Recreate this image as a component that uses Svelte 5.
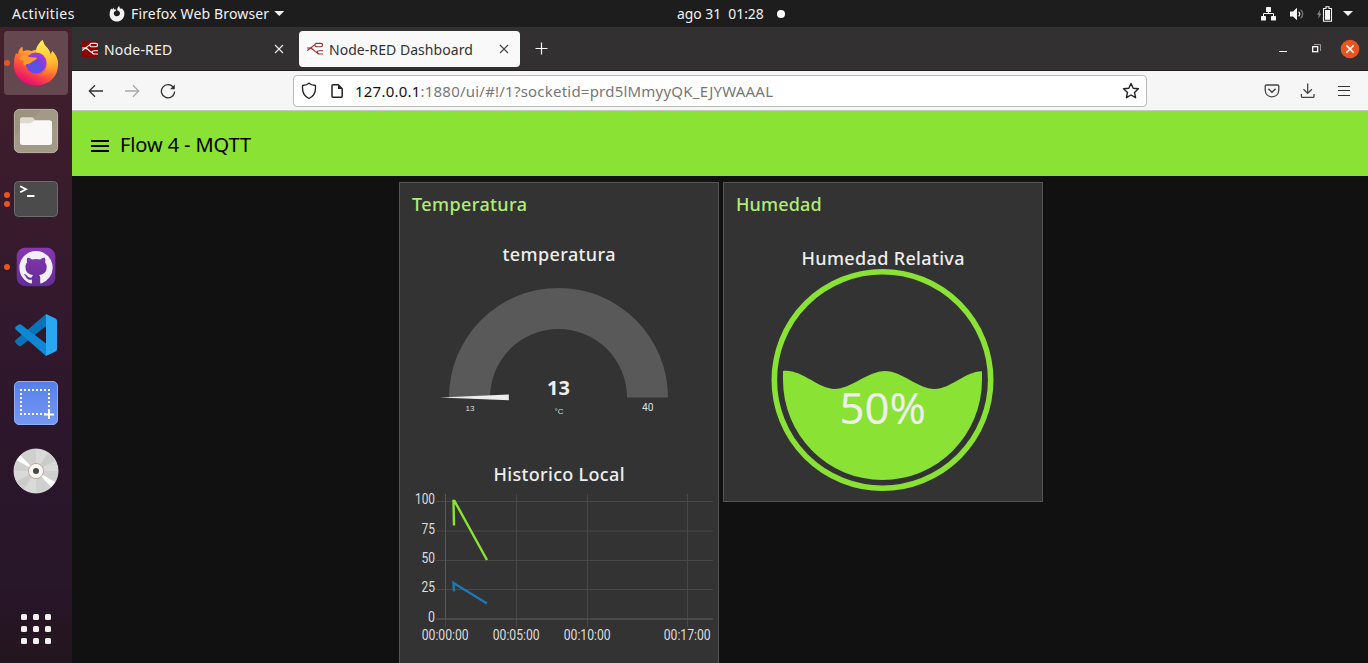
<script>
  const apps = ['firefox', 'files', 'terminal', 'github', 'code', 'capture', 'disc'];
  const running = { firefox: 1, terminal: 2, github: 1 };
  const yTicks = [
    { label: '100', y: 501.5, w: 20 },
    { label: '75', y: 531, w: 13.5 },
    { label: '50', y: 560.5, w: 13.5 },
    { label: '25', y: 589.5, w: 13.5 },
    { label: '0', y: 619, w: 7 }
  ];
  const xTicks = [
    { label: '00:00:00', x: 445.5 },
    { label: '00:05:00', x: 516.5 },
    { label: '00:10:00', x: 587.5 },
    { label: '00:17:00', x: 687.5 }
  ];
</script>

{#snippet flowIcon(bg, fg)}
  <svg class="fav" width="16" height="16" viewBox="0 0 16 16">
    <rect width="16" height="16" rx="1" fill={bg} />
    <g fill="none" stroke={fg} stroke-width="1.15">
      <path d="M0 7H2.5C6 7 5.3 4 8 4M3.5 7.4C7 7.4 6.8 11.3 10 11.3M0 9.4C2 9.4 2.2 7 4 7" />
      <rect x="8" y="2.3" width="7.4" height="3.4" rx="1.2" />
      <path d="M16 9.7H12.5C10.5 9.7 10.2 10.4 10.2 11.3S10.8 13 12.5 13H16" />
    </g>
  </svg>
{/snippet}

<div class="desktop">
  <header class="topbar">
    <span class="activities">Activities</span>
    <svg class="ffmono" width="16" height="16" viewBox="0 0 16 16">
      <path fill="#f2f2f2" fill-rule="evenodd" d="M1.2 4.6 2.2 2.4 3.3 3.5 4.5 1.4 5 3.4C6 3.2 7 3.6 7.4 4.2L5.7 5.5C4.4 6.2 4.5 8.7 6 9.7 8 11 11 9.6 11 7.2 11 5.6 9.5 4.8 8.2 4.2 8 2.2 9 .8 10.2 0L10.8 2.2 12 2.8 13 2.4C15 4.1 15.8 6.5 15.3 9 14.6 13 11.7 15.5 8 15.5 3.9 15.5.6 12.4.6 8.4.6 7 1 5.8 1.2 4.6Z" />
    </svg>
    <span class="appname">Firefox Web Browser</span>
    <i class="caret"></i>
    <div class="clock"><span>ago 31</span><span>01:28</span><b></b></div>
    <div class="tray">
      <svg width="16" height="14" viewBox="0 0 16 14"><g fill="#f5f5f5"><rect x="5" y="0" width="5" height="5" rx=".6" /><rect x="0" y="9" width="5" height="4.5" rx=".6" /><rect x="10" y="9" width="5" height="4.5" rx=".6" /></g><path d="M7.5 4V7M2.5 9V6.5H12.5V9" fill="none" stroke="#f5f5f5" /></svg>
      <svg width="16" height="14" viewBox="0 0 16 14"><path fill="#f5f5f5" d="M0 4.4H3L7 .8V13.2L3 9.6H0Z" /><path d="M8.7 4.6Q10.8 7 8.7 9.4" fill="none" stroke="#eee" stroke-width="1.2" /><path d="M10.6 2.6Q14.8 7 10.6 11.4" fill="none" stroke="#777" stroke-width="1.3" /></svg>
      <svg width="16" height="16" viewBox="0 0 16 16"><path fill="#888" d="M3.2 3.5 0 8.8H1.8L1.2 13 4.4 7.5H2.6Z" /><path d="M6.5 2.5H9V.8H12V2.5H14.5V15.2H6.5Z" fill="none" stroke="#f5f5f5" stroke-width="1.1" /><rect x="8" y="4" width="5" height="9.8" fill="#f5f5f5" /></svg>
      <i class="caret"></i>
    </div>
  </header>

  <div class="below">
    <nav class="dock">
      {#each apps as app}
        <div class="slot" class:active={app === 'firefox'}>
          {#if running[app]}
            <div class="dots">{#each Array(running[app]) as _}<i></i>{/each}</div>
          {/if}
          {#if app === 'firefox'}
            <svg width="46" height="48" viewBox="0 0 46 48">
              <defs>
                <linearGradient id="fx" x1=".8" y1="0" x2=".3" y2="1"><stop offset="0" stop-color="#fff44f" /><stop offset=".35" stop-color="#ffb02e" /><stop offset=".65" stop-color="#ff5a36" /><stop offset="1" stop-color="#e6007a" /></linearGradient>
                <linearGradient id="tail" x1=".3" y1="0" x2=".5" y2="1"><stop offset="0" stop-color="#fff15a" /><stop offset=".65" stop-color="#ffbd32" /><stop offset="1" stop-color="#ff8a2b" stop-opacity=".2" /></linearGradient>
                <radialGradient id="globe" cx=".45" cy=".7" r=".75"><stop offset="0" stop-color="#4a5be0" /><stop offset=".5" stop-color="#7542e5" /><stop offset="1" stop-color="#b735d8" /></radialGradient>
              </defs>
              <path fill="url(#fx)" d="M1.2 20 3 14 5 15.5C5 12 7 9.5 9.3 7.6L10 12.3C13 10.8 16 11 18.5 12L25 10C25 6 27 2.8 29.5 1L32 6.8C35 9 37 12 37.8 16L39.2 12C43.5 17 46 22 44.8 29 43 40 34 46.5 23.5 46.5 11 46.5 1 38 .8 26Z" />
              <circle cx="23" cy="24" r="10.5" fill="url(#globe)" />
              <path fill="#ff9a28" d="M6 20C9 14.5 14 15.5 16 18L24 18.8C24 21 20 22 18.5 23.2 16 26 12.5 23.8 12.3 27L10 25 11 22Z" />
              <path fill="url(#tail)" d="M29.5 1C24 6 22.5 10 23.5 13.5 28 13 32 16.5 33.5 20 34.5 24 34.5 27 33.5 30 32 34 29 36 25 36 35 39 44 32 44.8 24 44.8 19 42.5 15 39.2 12L37.8 16C36 8 31 8 29.5 1Z" />
            </svg>
          {:else if app === 'files'}
            <svg width="46" height="46" viewBox="0 0 46 46"><rect x="1.4" y="1.4" width="43.2" height="43.2" rx="5" fill="#9c937f" stroke="#bcb5a5" /><path d="M2 27 28 2H40Q44 2 44 7V40Q44 44 39 44H7Q2 44 2 39Z" fill="#a69d8b" opacity=".65" /><path d="M7 14V11Q7 9.2 9 9.2H18.5Q20 9.2 20.8 10.5L22 12.5V20H7Z" fill="#e0dacc" /><path d="M7 18V15.2H16.5Q18.5 15.2 20 13.5 21.3 12.2 23 12.2H36.5Q39 12.2 39 14.7V34.6Q39 37.1 36.5 37.1H9.5Q7 37.1 7 34.6Z" fill="#f9f8f6" /></svg>
          {:else if app === 'terminal'}
            <svg width="46" height="38" viewBox="0 0 46 38"><rect x="1.5" y="1.5" width="43" height="35" rx="4" fill="#4b4b4b" stroke="#6c6c6c" /><path d="M7.2 6.2 13 9.3 7.2 12.3M14 16H21.5" fill="none" stroke="#fff" stroke-width="1.8" /></svg>
          {:else if app === 'github'}
            <svg width="40" height="40" viewBox="0 0 40 40"><defs><linearGradient id="gh" x2="0" y2="1"><stop stop-color="#8a36b3" /><stop offset="1" stop-color="#602d95" /></linearGradient></defs><rect x=".7" y=".7" width="38.6" height="38.6" rx="8.5" fill="url(#gh)" /><g transform="translate(3.4 4) scale(2.08)"><path fill="#f3eff6" d="M8 0C3.58 0 0 3.58 0 8c0 3.54 2.29 6.53 5.47 7.59.4.07.55-.17.55-.38 0-.19-.01-.82-.01-1.49-2.01.37-2.53-.49-2.69-.94-.09-.23-.48-.94-.82-1.13-.28-.15-.68-.52-.01-.53.63-.01 1.08.58 1.23.82.72 1.21 1.87.87 2.33.66.07-.52.28-.87.51-1.07-1.78-.2-3.64-.89-3.64-3.95 0-.87.31-1.59.82-2.15-.08-.2-.36-1.02.08-2.12 0 0 .67-.21 2.2.82.64-.18 1.32-.27 2-.27s1.36.09 2 .27c1.53-1.04 2.2-.82 2.2-.82.44 1.1.16 1.92.08 2.12.51.56.82 1.27.82 2.15 0 3.07-1.87 3.75-3.65 3.95.29.25.54.73.54 1.48 0 1.07-.01 1.93-.01 2.2 0 .21.15.46.55.38A8.01 8.01 0 0 0 16 8c0-4.42-3.58-8-8-8z" /></g></svg>
          {:else if app === 'code'}
            <svg width="42" height="42" viewBox="0 0 42 42"><path fill="#0873b8" d="M.7 26 31 0V12L6 32Q4.8 32.8 3.5 31.7L.7 29Q-.5 27.5.7 26Z" /><path fill="#1087d3" d="M.7 16 3.5 11Q4.8 9.6 6 10.6L31 29.5V42L.7 15.5Q-.3 14 .7 12.8L4 10.3Z" /><path fill="#29a7f1" d="M31 0 40.5 4.4Q42 5.1 42 7V35Q42 36.8 40.5 37.5L31 42Z" /></svg>
          {:else if app === 'capture'}
            <svg width="46" height="46" viewBox="0 0 46 46"><defs><linearGradient id="cap" x2="0" y2="1"><stop stop-color="#557fe8" /><stop offset="1" stop-color="#7698f3" /></linearGradient></defs><rect x="1.5" y="1.5" width="43" height="43" rx="4.5" fill="url(#cap)" stroke="#91adf5" /><path d="M7 10H37M7 34H34M8 13V33M36 13V30" stroke="#fff" stroke-width="2" stroke-dasharray="2 2" /><path d="M36 30V39M31 34.5H41" stroke="#fff" stroke-width="2" /></svg>
          {:else}
            <svg width="46" height="46" viewBox="0 0 46 46"><circle cx="23" cy="23" r="22" fill="#d0d0cf" stroke="#eee" stroke-width=".8" /><path d="M23 23 23 1A22 22 0 0 1 45 23ZM23 23V45A22 22 0 0 1 1 23Z" fill="#dadad9" /><path d="M23 23 35 5A22 22 0 0 1 42 13ZM23 23 11 41A22 22 0 0 1 4 33Z" fill="#cbcbca" /><path d="M23 23 3.7 12.3 7.5 7.5ZM23 23 42 34 38 39Z" fill="#fff" /><circle cx="23" cy="23" r="7.6" fill="#f7f6f3" stroke="#b8ae9d" /><circle cx="23" cy="23" r="3" fill="#474747" /></svg>
          {/if}
        </div>
      {/each}
      <div class="grid-button">{#each Array(9) as _}<i></i>{/each}</div>
    </nav>

    <main class="browser">
      <div class="tabs">
        <div class="tab first">
          {@render flowIcon('#8f0000', '#fff')}
          <span class="t1">Node-RED</span>
          <svg class="x" width="10" height="10" viewBox="0 0 10 10"><path d="M1 1 9 9M9 1 1 9" stroke="#eee" stroke-width="1.1" /></svg>
        </div>
        <div class="tab current">
          {@render flowIcon('#fff', '#a62a2a')}
          <span class="t2">Node-RED Dashboard</span>
          <svg class="x" width="10" height="10" viewBox="0 0 10 10"><path d="M1 1 9 9M9 1 1 9" stroke="#444" stroke-width="1.1" /></svg>
        </div>
        <svg class="plus" width="13" height="13" viewBox="0 0 13 13"><path d="M6.5 .5V12.5M.5 6.5H12.5" stroke="#fff" stroke-width="1.2" /></svg>
        <div class="window-buttons">
          <svg width="8" height="10" viewBox="0 0 8 10"><path d="M0 7.5H8" stroke="#fff" /></svg>
          <svg width="9" height="9" viewBox="0 0 9 9"><path d="M2 .5H8.5V7" fill="none" stroke="#999" /><rect x=".7" y="2.7" width="5" height="5" fill="none" stroke="#fff" stroke-width="1.3" /></svg>
          <svg width="20" height="20" viewBox="0 0 20 20"><circle cx="10" cy="10" r="9.3" fill="#e95420" /><path d="M6.4 6.4 13.6 13.6M13.6 6.4 6.4 13.6" stroke="#fff" stroke-width="1.5" /></svg>
        </div>
      </div>

      <div class="toolbar">
        <svg width="16" height="14" viewBox="0 0 16 14"><path d="M15 7H1.8M7 1.3 1.3 7 7 12.7" fill="none" stroke="#333" stroke-width="1.3" /></svg>
        <svg width="16" height="14" viewBox="0 0 16 14"><path d="M1 7H14.2M9 1.3 14.7 7 9 12.7" fill="none" stroke="#aaa" stroke-width="1.3" /></svg>
        <svg width="16" height="16" viewBox="0 0 16 16"><path d="M13.6 4.8A6.6 6.6 0 1 0 14.6 8.5" fill="none" stroke="#333" stroke-width="1.3" /><path d="M14.8 1.5V6.2H10Z" fill="#333" /></svg>
        <div class="url">
          <svg width="16" height="18" viewBox="0 0 16 18"><path d="M8 1.2C6 3 3.5 3.3 1.6 3.5 1 9 2.8 14.2 8 16.5 13.2 14.2 15 9 14.4 3.5 12.5 3.3 10 3 8 1.2Z" fill="none" stroke="#222" stroke-width="1.35" /></svg>
          <svg width="12" height="14" viewBox="0 0 12 14"><path d="M1 1.7Q1 .8 2 .8H7.2L11.2 4.8V12.3Q11.2 13.2 10.3 13.2H2Q1 13.2 1 12.3Z" fill="none" stroke="#222" stroke-width="1.5" /><path d="M7 .8V5H11.2Z" fill="#222" /></svg>
          <span class="address"><b>127.0.0.1</b>:1880/ui/#!/1?socketid=prd5lMmyyQK_EJYWAAAL</span>
          <svg class="star" width="18" height="18" viewBox="0 0 18 18"><path d="M9 1.5 11.2 6.3 16.4 6.8 12.5 10.4 13.6 15.7 9 13 4.4 15.7 5.5 10.4 1.6 6.8 6.8 6.3Z" fill="none" stroke="#222" stroke-width="1.4" stroke-linejoin="round" /></svg>
        </div>
        <div class="tools">
          <svg width="16" height="14" viewBox="0 0 16 14"><path d="M2.3 1H13.7Q14.8 1 14.8 2.3V5.8C14.8 10 12 12.8 8 12.8S1.2 10 1.2 5.8V2.3Q1.2 1 2.3 1Z" fill="none" stroke="#444" stroke-width="1.3" /><path d="M4.4 4.8 8 8.3 11.6 4.8" fill="none" stroke="#444" stroke-width="1.5" /></svg>
          <svg width="16" height="16" viewBox="0 0 16 16"><path d="M7.7 .5V10M3.5 6.2 7.7 10.4 11.9 6.2M1.4 11V13.2Q1.4 14.4 2.6 14.4H12.8Q14 14.4 14 13.2V11" fill="none" stroke="#444" stroke-width="1.3" /></svg>
          <svg width="12" height="12" viewBox="0 0 12 12"><path d="M0 1.5H12M0 5.5H12M0 10.5H12" stroke="#333" stroke-width="1.1" /></svg>
        </div>
      </div>

      <div class="appbar">
        <svg width="18" height="12" viewBox="0 0 18 12"><path d="M0 1H18M0 6H18M0 11H18" stroke="#000" stroke-width="2" /></svg>
        <h1>Flow 4 - MQTT</h1>
      </div>

      <div class="board">
        <section class="card tall">
          <h2 class="ct">Temperatura</h2>
          <svg width="318" height="230" viewBox="400 225 318 230">
            <text class="heading" x="502.5" y="261" textLength="113">temperatura</text>
            <path d="M449 397.5A109.5 109.5 0 0 1 668 397.5H627A68.5 68.5 0 0 0 490 397.5Z" fill="#595959" />
            <path d="M440 397.6 508.8 394.4V400.2Z" fill="#eee" />
            <text class="value" x="547" y="395" textLength="23">13</text>
            <text class="tiny" x="470" y="411" text-anchor="middle">13</text>
            <text class="tiny" x="559" y="414" text-anchor="middle">°C</text>
            <text class="max" x="642" y="411" textLength="11.5" lengthAdjust="spacingAndGlyphs">40</text>
          </svg>
          <svg width="318" height="208" viewBox="400 455 318 208">
            <text class="heading" x="493.5" y="481" textLength="131">Historico Local</text>
            <g stroke="#484848">
              {#each yTicks as t}<path d="M436 {t.y}H713" />{/each}
              {#each xTicks as t}<path d="M{t.x} 494V627" />{/each}
            </g>
            <path d="M445.5 494V619M436 619H713" stroke="#575757" />
            {#each yTicks as t}<text class="tick" x={435 - t.w} y={t.y + 2.7} textLength={t.w} lengthAdjust="spacingAndGlyphs">{t.label}</text>{/each}
            {#each xTicks as t}<text class="tick" x={t.x - 23.8} y="640.3" textLength="47" lengthAdjust="spacingAndGlyphs">{t.label}</text>{/each}
            <path d="M454 525.5 453.5 501 454.5 501 487 560" fill="none" stroke="#8ae234" stroke-width="2.4" />
            <path d="M454 591.5 453.5 583 487 603.5" fill="none" stroke="#1f77b4" stroke-width="2.4" />
          </svg>
        </section>

        <section class="card">
          <h2 class="ch">Humedad</h2>
          <svg width="318" height="276" viewBox="724 225 318 276">
            <text class="heading" x="801.5" y="265" textLength="163">Humedad Relativa</text>
            <circle cx="882.5" cy="380" r="108.2" fill="none" stroke="#8ae234" stroke-width="5.6" />
            <path d="M783 371C802 369 818 389 834.5 389S868 371 885 371 918 389 934.5 389 966 371 982 371.3V380A99.5 100 0 0 1 783 380Z" fill="#8ae234" />
            <text class="percent" x="839.5" y="424.3" textLength="86.5" lengthAdjust="spacingAndGlyphs">50%</text>
          </svg>
        </section>
      </div>
    </main>
  </div>
</div>

<style>
  :global(body) { margin: 0; overflow: hidden; }
  .desktop { width: 1368px; height: 663px; overflow: hidden; background: #111; font-family: "Noto Sans", sans-serif; display: flex; flex-direction: column; }
  .desktop * { box-sizing: border-box; }
  svg { display: block; flex: none; }
  .topbar { height: 27px; flex: none; background: #1d1d1d; color: #f2f2f2; display: grid; grid-template-columns: 97px auto auto auto 1fr auto; align-items: center; padding-left: 12px; font-size: 14px; line-height: 27px; white-space: nowrap; position: relative; }
  .activities { letter-spacing: .45px; }
  .ffmono { margin-right: 6px; }
  .appname { letter-spacing: .15px; }
  .caret { width: 10px; height: 5px; background: #f2f2f2; clip-path: polygon(0 0, 100% 0, 50% 100%); margin-left: 5px; }
  .clock { position: absolute; left: 677px; top: 0; display: flex; align-items: center; gap: 7px; font-size: 13.9px; }
  .clock b { width: 8px; height: 8px; border-radius: 50%; background: #fff; margin-left: 6px; }
  .tray { grid-column: 6; display: flex; align-items: center; gap: 13px; padding-right: 15px; }
  .tray svg { position: relative; left: 2px; }
  .tray svg:nth-child(3) { left: 0; }
  .tray .caret { margin-left: -3px; }
  .below { flex: 1; display: flex; min-height: 0; }
  .dock { width: 72px; flex: none; padding: 4px; display: flex; flex-direction: column; gap: 4px; background: linear-gradient(#44202b, #391b2d 25%, #2c162b 65%, #281629 88%, #23151e); }
  .slot { height: 64px; flex: none; border-radius: 4px; display: grid; place-items: center; position: relative; }
  .slot.active { background: #65484f; }
  .dots { position: absolute; left: 0; top: 0; height: 64px; display: flex; flex-direction: column; justify-content: center; gap: 3px; }
  .dots i { width: 6px; height: 6px; border-radius: 50%; background: #e95420; }
  .grid-button { display: grid; grid-template-columns: repeat(3, 6px); gap: 6px; margin: auto 17px 15px; }
  .grid-button i { height: 6px; border-radius: 1.5px; background: #f2f1f0; }
  .browser { flex: 1; min-width: 0; display: flex; flex-direction: column; }
  .tabs { height: 44px; flex: none; background: #323031; border-bottom: 1px solid #1f1d1e; display: flex; align-items: center; }
  .tab { height: 36px; display: flex; align-items: center; padding: 0 11px 0 8px; border-radius: 4px; font-size: 14px; white-space: nowrap; }
  .tab span { padding-top: 1px; }
  .t1 { letter-spacing: .2px; }
  .t2 { letter-spacing: .05px; }
  .tab.first { width: 223px; color: #f2f2f2; padding-left: 10px; }
  .tab.current { width: 221px; margin-left: 4px; background: #f9f9f9; color: #333; }
  .fav { margin-right: 6px; }
  .x { margin-left: auto; }
  .plus { margin-left: 15px; }
  .window-buttons { margin-left: auto; display: flex; align-items: center; gap: 24px; padding-right: 8px; }
  .window-buttons svg:first-child { margin-right: 1px; }
  .window-buttons svg:last-child { margin-left: -5px; }
  .toolbar { height: 40px; flex: none; background: #f6f6f6; border-bottom: 1px solid #c8c8c8; display: flex; align-items: center; gap: 20px; padding: 1px 0 0 16px; }
  .url { width: 854px; height: 32px; margin-left: 97px; border: 1px solid #bbb; border-radius: 4px; background: #fff; display: flex; align-items: center; padding: 0 6px 0 7px; }
  .url svg + svg { margin-left: 14px; }
  .address { margin-left: 12px; font-size: 15px; letter-spacing: .22px; color: #777; white-space: nowrap; }
  .address b { font-weight: 400; color: #111; }
  .url .star { margin-left: auto; }
  .tools { margin-left: auto; display: flex; align-items: center; gap: 20px; padding-right: 18px; }
  .tools svg:last-child { margin-left: 2px; }
  .appbar { height: 65px; flex: none; background: #8ae234; display: flex; align-items: center; padding: 4px 0 0 19px; gap: 11px; color: #000; }
  h1 { margin: -1px 0 0; font-size: 20px; font-weight: 400; line-height: 28px; letter-spacing: -.1px; }
  .board { flex: 1; min-height: 0; display: flex; align-items: flex-start; gap: 4px; padding: 6px 0 0 327px; background: #111; overflow: hidden; }
  .card { width: 320px; height: 320px; flex: none; border: 1px solid #555; background: #333; }
  .card.tall { height: 500px; }
  h2 { margin: 0; height: 42px; padding-left: 12px; font-size: 18px; font-weight: 500; line-height: 42px; color: #b1ed75; }
  .ct { letter-spacing: .4px; }
  .ch { letter-spacing: .15px; }
  .heading { font-size: 18px; font-weight: 500; fill: #eee; }
  .value { font-size: 20px; font-weight: 700; fill: #eee; }
  .tiny { font: 8px "Liberation Sans", sans-serif; fill: #ddd; }
  .max { font: 11.5px Roboto, sans-serif; fill: #ddd; }
  .tick { font: 14.5px Roboto, sans-serif; fill: #ddd; }
  .percent { font-size: 43px; fill: #eee; }
</style>
